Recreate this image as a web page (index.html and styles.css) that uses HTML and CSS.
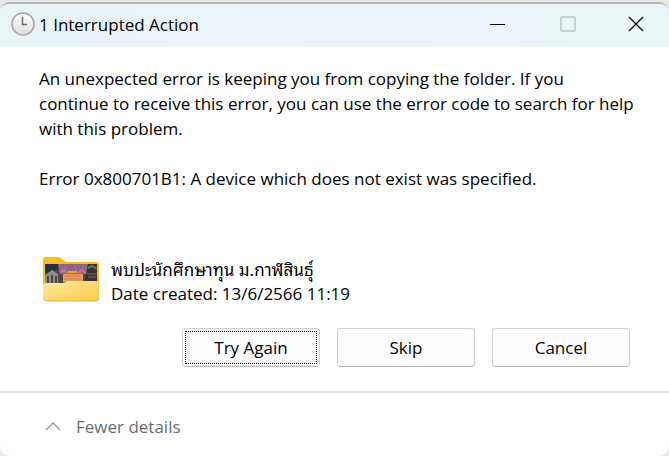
FILE: index.html
```
<!DOCTYPE html>
<html lang="en">
<head>
  <meta charset="UTF-8" />
  <meta name="viewport" content="width=device-width, initial-scale=1.0"/>
  <title>1 Interrupted Action</title>
  <link rel="stylesheet" href="styles.css">
</head>
<body>

  <main class="dialog">
    <header class="titlebar">
      <svg class="clock" viewBox="0 0 24 24" aria-hidden="true">
        <defs>
          <linearGradient id="clockFace" x1="0" y1="0" x2="0" y2="1">
            <stop offset="0" stop-color="#ffffff"/>
            <stop offset="1" stop-color="#dedede"/>
          </linearGradient>
        </defs>
        <circle cx="12" cy="12" r="11" fill="url(#clockFace)" stroke="#a6a6a6" stroke-width="1.500"/>
        <path d="M11.5 5V12.500H16" fill="none" stroke="#6e6e6e" stroke-width="1.500"/>
      </svg>
      <h1>1 Interrupted Action</h1>
      <div class="window-controls">
        <button type="button" aria-label="Minimize">
          <svg viewBox="0 0 16 16"><path d="M0 8.500H15" stroke="#000"/></svg>
        </button>
        <button type="button" aria-label="Maximize" disabled>
          <svg viewBox="0 0 16 16"><rect x="1" y="1" width="14" height="14" rx="1" fill="none" stroke="#bcc5c8" stroke-width="1.300"/></svg>
        </button>
        <button type="button" aria-label="Close">
          <svg viewBox="0 0 16 16"><path d="M1 1L15 15M15 1L1 15" stroke="#111" stroke-width="1.400"/></svg>
        </button>
      </div>
    </header>

    <section class="content">
      <p>An unexpected error is keeping you from copying the folder. If you<br> continue to receive this error, you can use the error code to search for help with this problem.</p>
      <p>Error 0x800701B1: A device which does not exist was specified.</p>

      <div class="item">
        <svg class="folder" viewBox="0 0 58 46" aria-hidden="true">
          <defs>
            <linearGradient id="folderFront" x1="0" y1="0" x2="1" y2="1">
              <stop offset="0" stop-color="#ffe9a2"/>
              <stop offset="1" stop-color="#ffcb45"/>
            </linearGradient>
          </defs>
          <path d="M1 4Q1 1 4 1H16Q18 1 20 3L24 6H54Q57 6 57 9V38H1Z" fill="#f9bd20"/>
          <!-- photo peeking out of the folder -->
          <path d="M3 8H55V30H3Z" fill="#4c4448"/>
          <path d="M3 8H16V13L9 16L3 19Z" fill="#20323d"/>
          <path d="M3 19L10 14L16 18V28H3Z" fill="#8f8d88"/>
          <path d="M6 20V27M10 19V27M14 20V27" stroke="#4b4643" stroke-width="2"/>
          <path d="M16 8H46L44 18H18Z" fill="#8c6a72"/>
          <path d="M17 10L22 13M27 10L31 13M36 10L41 13" stroke="#d8487c" stroke-width="2"/>
          <path d="M22 10L26 14M32 10L35 14M41 9L44 14" stroke="#6d7bb8" stroke-width="2"/>
          <path d="M18 16L22 14L25 17M36 17L40 14L44 17" fill="none" stroke="#c96fb0" stroke-width="2"/>
          <path d="M26 16H35" stroke="#e8a040" stroke-width="2"/>
          <path d="M21 18H41V26H21Z" fill="#e8a04f"/>
          <path d="M23 20H39M22 23H40" stroke="#d5706a"/>
          <path d="M46 8H55V25H43Z" fill="#3a3232"/>
          <path d="M46 12L50 10L55 13" fill="none" stroke="#5f7550" stroke-width="2"/>
          <path d="M45 18H55M46 21H54" stroke="#6f6a64"/>
          <path d="M1 30Q1 27 4 27H20Q22 27 24 26L27 25Q28 25 30 25H54Q57 25 57 28V42Q57 45 54 45H4Q1 45 1 42Z" fill="url(#folderFront)"/>
          <path d="M2 43Q3 45 5 45H54Q56 45 57 42" fill="none" stroke="#e9b02e"/>
        </svg>
        <div class="item-info">
          <div class="item-name" lang="th">พบปะนักศึกษาทุน ม.กาฬสินธุ์</div>
          <div>Date created: 13/6/2566 11:19</div>
        </div>
      </div>

      <div class="actions">
        <button type="button" class="focused">Try Again</button>
        <button type="button">Skip</button>
        <button type="button">Cancel</button>
      </div>
    </section>

    <footer class="details">
      <button type="button">
        <svg viewBox="0 0 16 10" aria-hidden="true"><path d="M1 8L8 1L15 8" fill="none" stroke="#999" stroke-width="1.300"/></svg>
        Fewer details
      </button>
    </footer>
  </main>

</body>
</html>
```
FILE: styles.css
```
* {
  box-sizing: border-box;
}

body {
  margin: 0;
  padding-top: 2px;
  background-color: #e9e9e9;
  color: #000;
  font-family: "Open Sans", "Noto Sans", sans-serif;
  font-size: 17px;
  line-height: 25px;
}

button {
  padding: 0;
  border: none;
  background: none;
  color: inherit;
  font: inherit;
}

.dialog {
  display: flex;
  flex-direction: column;
  min-height: calc(100vh - 2px);
  border-top: 2px solid #b3b3b3;
  border-radius: 10px;
  background-color: #fff;
  overflow: hidden;
}

.titlebar {
  display: flex;
  align-items: center;
  height: 43px;
  padding: 0 0 3px 11px;
  background: linear-gradient(to right, #e9f4f7, #ebf3fa 60%, #e9f5f6);
}

.clock {
  width: 24px;
  height: 24px;
  margin-right: 4px;
}

.titlebar h1 {
  margin: 0;
  font-size: 17px;
  font-weight: normal;
}

.window-controls {
  display: flex;
  margin-left: auto;
}

.window-controls button {
  display: flex;
  align-items: center;
  justify-content: center;
  width: 70px;
  height: 40px;
}

.window-controls button:last-child {
  width: 66px;
}

.window-controls svg {
  width: 16px;
  height: 16px;
}

.content {
  padding: 19px 30px 24px 39px;
}

.content p {
  margin: 0 0 25px;
}

.item {
  display: flex;
  align-items: flex-start;
  gap: 11px;
  margin-top: 65px;
  padding-left: 3px;
}

.folder {
  width: 58px;
  height: 46px;
}

.item-name {
  font-family: "Leelawadee UI", "Noto Sans Thai Looped", Loma, "Open Sans", sans-serif;
}

.actions {
  display: flex;
  justify-content: flex-end;
  gap: 17px;
  margin-top: 22px;
  padding-right: 9px;
}

.actions button {
  width: 138px;
  height: 39px;
  border: 1px solid #d0d0d0;
  border-bottom-color: #b9b9b9;
  border-radius: 4px;
  background-color: #fdfdfd;
}

.actions .focused {
  outline: 1px dotted #000;
  outline-offset: -4px;
}

.details {
  flex: 1;
  padding: 21px 45px 0;
  border-top: 2px solid #e1e1e1;
}

.details button {
  display: flex;
  align-items: center;
  gap: 15px;
  color: #6d6d6d;
}

.details svg {
  width: 16px;
  height: 10px;
}
```
